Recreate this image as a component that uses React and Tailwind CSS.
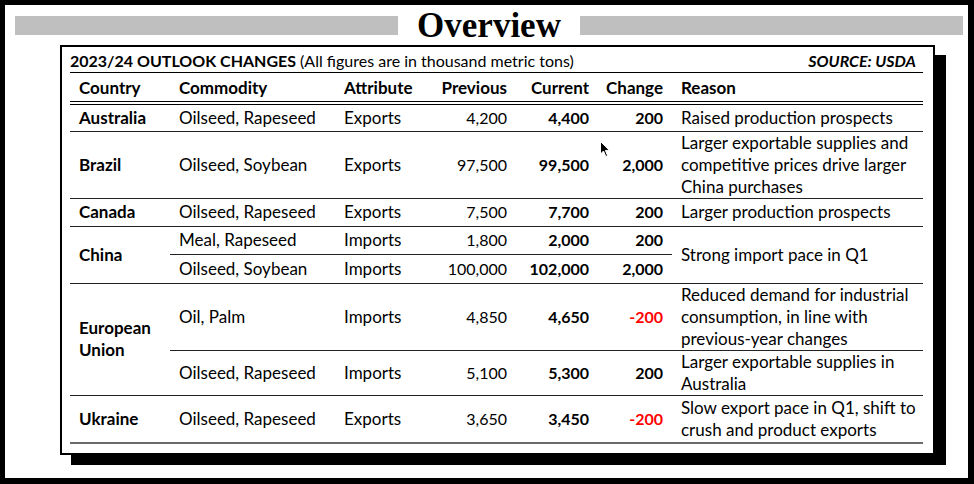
import React from 'react'

const rows = [
  { country: 'Australia', commodity: 'Oilseed, Rapeseed', attr: 'Exports', prev: '4,200', cur: '4,400', chg: '200', reason: ['Raised production prospects'], h: 'h-[28px]' },
  { country: 'Brazil', commodity: 'Oilseed, Soybean', attr: 'Exports', prev: '97,500', cur: '99,500', chg: '2,000', reason: ['Larger exportable supplies and', 'competitive prices drive larger', 'China purchases'], h: 'h-[67px]' },
  { country: 'Canada', commodity: 'Oilseed, Rapeseed', attr: 'Exports', prev: '7,500', cur: '7,700', chg: '200', reason: ['Larger production prospects'], h: 'h-[28px]' },
  { country: 'China', span: 2, commodity: 'Meal, Rapeseed', attr: 'Imports', prev: '1,800', cur: '2,000', chg: '200', reason: ['Strong import pace in Q1'], reasonSpan: 2, h: 'h-[28px]' },
  { commodity: 'Oilseed, Soybean', attr: 'Imports', prev: '100,000', cur: '102,000', chg: '2,000', h: 'h-[29px]' },
  { country: ['European', 'Union'], span: 2, commodity: 'Oil, Palm', attr: 'Imports', prev: '4,850', cur: '4,650', chg: '-200', reason: ['Reduced demand for industrial', 'consumption, in line with', 'previous-year changes'], h: 'h-[64px]' },
  { commodity: 'Oilseed, Rapeseed', attr: 'Imports', prev: '5,100', cur: '5,300', chg: '200', reason: ['Larger exportable supplies in', 'Australia'], h: 'h-[45px]' },
  { country: 'Ukraine', commodity: 'Oilseed, Rapeseed', attr: 'Exports', prev: '3,650', cur: '3,450', chg: '-200', reason: ['Slow export pace in Q1, shift to', 'crush and product exports'], h: 'h-[48px]', last: true },
]

function Lines({ items }) {
  const list = Array.isArray(items) ? items : [items]
  return list.map((t, i) => (
    <React.Fragment key={i}>
      {i > 0 && <br />}
      {t}
    </React.Fragment>
  ))
}

export default function App() {
  return (
    <div className="w-[974px] h-[484px] bg-black pt-[5px] pl-[5px] pr-[6px] pb-[6px]">
      <div className="w-full h-full bg-white relative" style={{ fontFamily: 'Lato, "Open Sans", sans-serif' }}>
        <div className="flex items-center gap-[19px] pl-[10px] pr-[5px] pt-[11px]">
          <div className="flex-1 h-[19px] bg-[#bfbfbf]"></div>
          <h1 className="text-[35px] leading-[19px] font-bold text-black" style={{ fontFamily: '"Liberation Serif", "Times New Roman", serif' }}>
            Overview
          </h1>
          <div className="flex-1 h-[19px] bg-[#bfbfbf]"></div>
        </div>

        <div className="ml-[55px] mt-[10px] w-[875px] h-[410px] border-2 border-black bg-white pl-[8px] pr-[10px] shadow-[11px_10px_0_0_#000] text-black">
          <div className="flex items-center justify-between h-[26px] pt-[2px] border-b border-black pr-[7px] text-[16px]">
            <div className="whitespace-nowrap">
              <span className="font-bold">2023/24 OUTLOOK CHANGES</span> (All figures are in thousand metric tons)
            </div>
            <div className="font-bold italic">SOURCE: USDA</div>
          </div>

          <table className="w-[853px] table-fixed border-collapse leading-[22px] text-[17px]">
            <colgroup>
              <col className="w-[100px]" />
              <col className="w-[165px]" />
              <col className="w-[90px]" />
              <col className="w-[90px]" />
              <col className="w-[82px]" />
              <col className="w-[75px]" />
              <col className="w-[251px]" />
            </colgroup>
            <thead>
              <tr className="h-[30px] font-bold">
                <th className="text-left px-[9px] pt-[2px] border-b-4 border-double border-black">Country</th>
                <th className="text-left px-[9px] pt-[2px] border-b-4 border-double border-black">Commodity</th>
                <th className="text-left px-[9px] pt-[2px] border-b-4 border-double border-black">Attribute</th>
                <th className="text-right px-[8px] pt-[2px] border-b-4 border-double border-black">Previous</th>
                <th className="text-right px-[8px] pt-[2px] border-b-4 border-double border-black">Current</th>
                <th className="text-right px-[9px] pt-[2px] border-b-4 border-double border-black">Change</th>
                <th className="text-left px-[9px] pt-[2px] border-b-4 border-double border-black">Reason</th>
              </tr>
            </thead>
            <tbody>
              {rows.map((r, i) => {
                const line = r.last ? 'border-b-2 border-[#6b6b6b]' : 'border-b border-[#222]'
                return (
                  <tr key={i} className={r.h}>
                    {r.country && (
                      <td rowSpan={r.span || 1} className={`px-[9px] font-bold align-middle whitespace-nowrap ${line}`}>
                        <Lines items={r.country} />
                      </td>
                    )}
                    <td className={`px-[9px] whitespace-nowrap ${line}`}>{r.commodity}</td>
                    <td className={`px-[9px] whitespace-nowrap ${line}`}>{r.attr}</td>
                    <td className={`px-[8px] text-right text-[16px] whitespace-nowrap ${line}`}>{r.prev}</td>
                    <td className={`px-[8px] text-right text-[16px] font-bold whitespace-nowrap ${line}`}>{r.cur}</td>
                    <td className={`px-[9px] text-right text-[16px] font-bold whitespace-nowrap ${r.chg.startsWith('-') ? 'text-[#ff0000]' : ''} ${line}`}>{r.chg}</td>
                    {r.reason && (
                      <td rowSpan={r.reasonSpan || 1} className={`px-[9px] whitespace-nowrap ${line}`}>
                        <Lines items={r.reason} />
                      </td>
                    )}
                  </tr>
                )
              })}
            </tbody>
          </table>
        </div>

        <svg className="absolute left-[595px] top-[136px]" width="10" height="17" viewBox="0 0 10 17">
          <path d="M0.5 0.5 L0.5 13 L3.5 10 L5.8 15.5 L7.6 14.7 L5.4 9.4 L9.5 9.4 Z" fill="#000" stroke="#fff" strokeWidth="1" />
        </svg>
      </div>
    </div>
  )
}
